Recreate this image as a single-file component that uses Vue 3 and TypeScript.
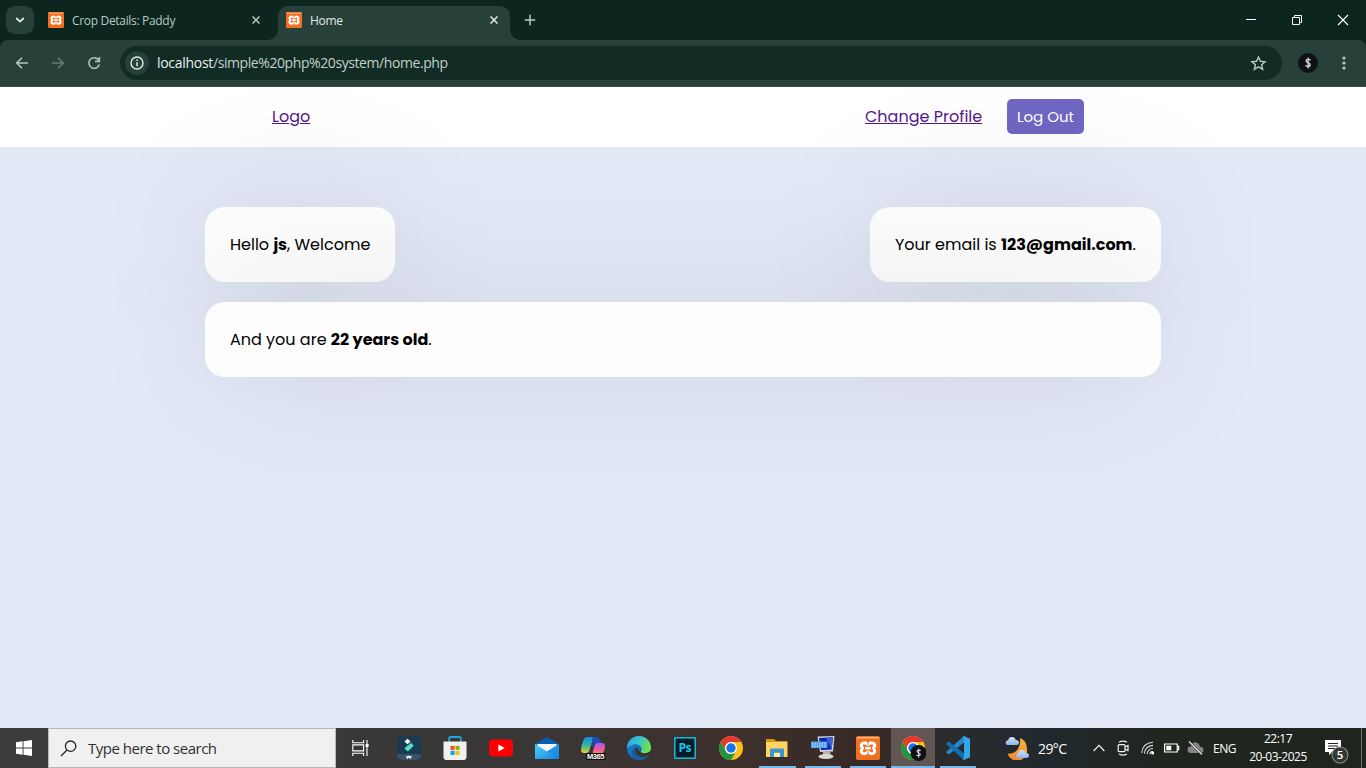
<script setup lang="ts">
interface Tab {
  title: string
  active: boolean
}

const tabs: Tab[] = [
  { title: 'Crop Details: Paddy', active: false },
  { title: 'Home', active: true },
]

interface TaskApp {
  id: string
  running?: boolean
  focused?: boolean
}

const apps: TaskApp[] = [
  { id: 'filmora' },
  { id: 'store' },
  { id: 'youtube' },
  { id: 'mail' },
  { id: 'copilot' },
  { id: 'edge' },
  { id: 'photoshop' },
  { id: 'chrome' },
  { id: 'explorer', running: true },
  { id: 'keyboard', running: true },
  { id: 'xampp', running: true },
  { id: 'chromeProfile', running: true, focused: true },
  { id: 'vscode', running: true },
]
</script>

<template>
  <svg class="defs" width="0" height="0">
    <defs>
      <linearGradient id="mailBody" x1="0" y1="0" x2="1" y2="1">
        <stop offset="0" stop-color="#50d2fa" /><stop offset="1" stop-color="#1583dc" />
      </linearGradient>
      <linearGradient id="copA" x1="0" y1="0" x2="0" y2="1">
        <stop offset="0" stop-color="#1a8be8" /><stop offset=".55" stop-color="#35b89c" /><stop offset="1" stop-color="#f0cf25" />
      </linearGradient>
      <linearGradient id="copB" x1="0" y1="0" x2="0" y2="1">
        <stop offset="0" stop-color="#a55cf0" /><stop offset=".6" stop-color="#ef5a9c" /><stop offset="1" stop-color="#f88a58" />
      </linearGradient>
      <linearGradient id="edgeTop" x1="0" y1="0" x2="1" y2=".4">
        <stop offset="0" stop-color="#2c9fe0" /><stop offset=".5" stop-color="#35c1d4" /><stop offset="1" stop-color="#6ee04a" />
      </linearGradient>
      <linearGradient id="edgeLow" x1="0" y1="0" x2="1" y2="1">
        <stop offset="0" stop-color="#1b8fdd" /><stop offset="1" stop-color="#114a8b" />
      </linearGradient>
      <linearGradient id="moonFill" x1="0" y1="0" x2="0" y2="1">
        <stop offset="0" stop-color="#f9b43a" /><stop offset="1" stop-color="#f0872a" />
      </linearGradient>
      <linearGradient id="cloudFill" x1="0" y1="0" x2="0" y2="1">
        <stop offset="0" stop-color="#d6e6fc" /><stop offset="1" stop-color="#8cb2ec" />
      </linearGradient>
      <symbol id="xampp" viewBox="0 0 24 24">
        <rect width="24" height="24" rx="2" fill="#f07020" />
        <path d="M1 1.8h22" stroke="#f9b98b" stroke-width="1.4" />
        <path d="M12 8.6C10.6 7 9 6.6 7.4 7C4.8 7.6 4.6 9.9 6.6 12C4.6 14.2 4.8 17 7.4 17.6C9 17.9 10.6 17.4 12 15.8C13.4 17.4 15 17.9 16.6 17.6C19.2 17 19.4 14.2 17.4 12C19.4 9.9 19.2 7.6 16.6 7C15 6.6 13.4 7 12 8.6Z" fill="none" stroke="#fff" stroke-width="3.1" stroke-linejoin="round" />
        <path d="M9.2 12.2h5.6" stroke="#fff" stroke-width="2.6" />
        <path d="M12 4.6v4.6M12 15.2v4.4" stroke="#f07020" stroke-width="1" />
      </symbol>
      <symbol id="chromeLogo" viewBox="0 0 48 48">
        <circle cx="24" cy="24" r="24" fill="#fbc116" />
        <path d="M3.2 12A24 24 0 0 1 44.8 12H24A12 12 0 0 0 13.6 30Z" fill="#e33b2e" />
        <path d="M3.2 12L13.6 30A12 12 0 0 0 34.4 30L24 48A24 24 0 0 1 3.2 12Z" fill="#229342" />
        <circle cx="24" cy="24" r="12" fill="#fff" />
        <circle cx="24" cy="24" r="9.4" fill="#1a73e8" />
      </symbol>
      <symbol id="dollar" viewBox="0 0 20 20">
        <circle cx="10" cy="10" r="10" fill="#0d1115" />
        <path d="M12.6 7.4C12 6.2 8.2 5.8 8.1 7.9C8 10 12.3 9.5 12.2 11.9C12.1 14 8.4 13.8 7.5 12.4M10.2 4.4v11.2" fill="none" stroke="#cfcfcf" stroke-width="1.4" />
      </symbol>
    </defs>
  </svg>

  <div class="screen">
    <div class="tabstrip">
      <button class="tab-search" aria-label="Search tabs">
        <svg width="10" height="6" viewBox="0 0 10 6"><path d="M1.2 1l3.8 3.6L8.8 1" fill="none" stroke="#e0ebe7" stroke-width="1.8" /></svg>
      </button>
      <div v-for="tab in tabs" :key="tab.title" class="tab" :class="{ active: tab.active }">
        <svg class="favicon" width="16" height="16"><use href="#xampp" /></svg>
        <span class="tab-title">{{ tab.title }}</span>
        <svg class="tab-close" width="8" height="8" viewBox="0 0 8 8"><path d="M.5.5l7 7M7.5.5l-7 7" stroke="currentColor" stroke-width="1.5" /></svg>
      </div>
      <svg class="new-tab" width="12" height="12" viewBox="0 0 12 12"><path d="M6 .8v10.4M.8 6h10.4" stroke="#b5cbc3" stroke-width="1.5" /></svg>
      <div class="window-buttons">
        <svg width="12" height="12" viewBox="0 0 12 12"><path d="M1 5.5h10" stroke="#fff" /></svg>
        <svg width="12" height="12" viewBox="0 0 12 12"><path d="M1.5 3.5h7v7h-7zM3.5 3.5v-2h7v7h-2" fill="none" stroke="#fff" /></svg>
        <svg width="12" height="12" viewBox="0 0 12 12"><path d="M1 1l10 10M11 1L1 11" stroke="#fff" stroke-width="1.2" /></svg>
      </div>
    </div>

    <div class="toolbar">
      <svg width="16" height="16" viewBox="0 0 16 16"><path d="M14 8H3M8 2.7L2.7 8L8 13.3" fill="none" stroke="#aec7be" stroke-width="1.6" /></svg>
      <svg width="16" height="16" viewBox="0 0 16 16"><path d="M2 8h11M8 2.7L13.3 8L8 13.3" fill="none" stroke="#627b73" stroke-width="1.6" /></svg>
      <svg width="16" height="16" viewBox="0 0 16 16"><path d="M12.7 5.2A5.3 5.3 0 1 0 13.3 9.4M13.4 2v4.4H9" fill="none" stroke="#aec7be" stroke-width="1.6" /></svg>
      <div class="omnibox">
        <div class="site-info">
          <svg width="14" height="14" viewBox="0 0 14 14"><circle cx="7" cy="7" r="6" fill="none" stroke="#e0ebe7" stroke-width="1.4" /><path d="M7 6.2v4M7 3.4v1.5" stroke="#e0ebe7" stroke-width="1.5" /></svg>
        </div>
        <span class="url"><b>localhost</b>/simple%20php%20system/home.php</span>
        <svg class="star" width="17" height="17" viewBox="0 0 16 16"><path d="M8 1.9l1.8 4 4.4.4-3.3 2.9 1 4.3L8 11.2l-3.9 2.3 1-4.3-3.3-2.9 4.4-.4z" fill="none" stroke="#b9cac4" stroke-width="1.3" /></svg>
      </div>
      <svg width="20" height="20"><use href="#dollar" /></svg>
      <svg width="4" height="16" viewBox="0 0 4 16" fill="#b9cac4"><circle cx="2" cy="3" r="1.6" /><circle cx="2" cy="8" r="1.6" /><circle cx="2" cy="13" r="1.6" /></svg>
    </div>

    <div class="page">
      <nav class="nav">
        <a class="link logo">Logo</a>
        <div class="right-links">
          <a class="link profile">Change Profile</a>
          <button class="btn">Log Out</button>
        </div>
      </nav>
      <main>
        <div class="top">
          <div class="box"><p class="hello">Hello <b>js</b>, Welcome</p></div>
          <div class="box"><p class="email">Your email is <b>123@gmail.com</b>.</p></div>
        </div>
        <div class="bottom">
          <div class="box"><p class="age">And you are <b>22 years old</b>.</p></div>
        </div>
      </main>
    </div>

    <div class="taskbar">
      <div class="start">
        <svg width="16" height="16" viewBox="0 0 16 16" fill="#fff"><path d="M0 2.2L6.6 1.3V7.5H0zM7.5 1.2L16 0V7.5H7.5zM0 8.4H6.6V14.7L0 13.8zM7.5 8.4H16V16L7.5 14.8z" /></svg>
      </div>
      <div class="search">
        <svg width="17" height="17" viewBox="0 0 17 17"><circle cx="10.6" cy="6.2" r="5.2" fill="none" stroke="#222" stroke-width="1.3" /><path d="M7 10L1 16" stroke="#222" stroke-width="1.3" /></svg>
        <span>Type here to search</span>
      </div>
      <div class="task-view">
        <svg width="17" height="16" viewBox="0 0 17 16" fill="none" stroke="#fff" stroke-width="1.1"><path d="M.8 0v2.8h10.8V0M.8 16v-2.8h10.8V16M.8 4.9h10.8v6H.8zM15 0v16" /><path d="M13.6 4h3v3h-3z" fill="#fff" stroke="none" /></svg>
      </div>
      <div v-for="app in apps" :key="app.id" class="app" :class="[app.id, { running: app.running, focused: app.focused }]">
        <svg v-if="app.id === 'filmora'" width="24" height="24" viewBox="0 0 24 24">
          <rect width="24" height="24" rx="5" fill="#183a52" /><path d="M0 18h24v1a5 5 0 0 1-5 5H5a5 5 0 0 1-5-5z" fill="#365168" />
          <path d="M10.5 2.7l3 2.8-3 2.8-3-2.8z" fill="#fff" /><path d="M11.8 8.8l2-2 3 2.9-6 5.8-3.4-3.1 3.2-2.8z" fill="#50e3c2" />
          <path d="M9.5 20l1 2 1.4-1.8 1.4 1.8 1-2" fill="none" stroke="#fff" stroke-width="1.3" />
        </svg>
        <svg v-else-if="app.id === 'store'" width="24" height="24" viewBox="0 0 24 24">
          <path d="M6.2 6V2.2q0-1.2 1.2-1.2h9.2q1.2 0 1.2 1.2V6" fill="none" stroke="#20a4dd" stroke-width="1.8" />
          <path d="M.5 5.5h23V21a3 3 0 0 1-3 3h-17a3 3 0 0 1-3-3z" fill="#f0f0f0" />
          <path d="M7.5 9.8h4.1v4.1H7.5z" fill="#f25022" /><path d="M12.5 9.8h4.1v4.1h-4.1z" fill="#7fba00" /><path d="M7.5 14.8h4.1v4.1H7.5z" fill="#00a4ef" /><path d="M12.5 14.8h4.1v4.1h-4.1z" fill="#ffb900" />
        </svg>
        <svg v-else-if="app.id === 'youtube'" width="24" height="24" viewBox="0 0 24 24"><rect y="3.6" width="24" height="16.8" rx="3.8" fill="#f00" /><path d="M9.4 8.6v7l6.3-3.5z" fill="#fff" /></svg>
        <svg v-else-if="app.id === 'mail'" width="24" height="24" viewBox="0 0 24 24">
          <path d="M0 8L12 1l12 7v7H0z" fill="#075fb5" /><path d="M2 8h20l-3 9H5z" fill="#f4f7fb" /><path d="M0 8l12 7.5L24 8v15H0z" fill="url(#mailBody)" /><path d="M24 8v15L10 14.2l2 1.3z" fill="#168be0" opacity=".6" />
        </svg>
        <svg v-else-if="app.id === 'copilot'" width="26" height="26" viewBox="0 0 26 26">
          <path d="M7 2h8q-2 1-3 5l-2.5 8Q8.7 18 6 18H4q-3 0-3-3 0-5 3-11Q5 2 7 2z" fill="url(#copA)" />
          <path d="M12 2h4q3 0 4 3l1 3h-5q-2 0-3 3l-1 3q1-6 0-12z" fill="#1b4fb9" />
          <path d="M17 8h5q3 0 3 3 0 8-6 8h-5q-2 0-1-3l1.5-5Q15.5 8 17 8z" fill="url(#copB)" />
          <rect x="6.3" y="18" width="19" height="7" fill="#090909" />
          <text x="7" y="24.2" textLength="17.5" font-size="7.5" font-weight="bold" font-family="Liberation Sans, sans-serif" fill="#fff">M365</text>
        </svg>
        <svg v-else-if="app.id === 'edge'" width="24" height="24" viewBox="0 0 24 24">
          <circle cx="12" cy="12" r="12" fill="url(#edgeLow)" />
          <path d="M0 12A12 12 0 0 1 24 12C24 16 20.5 17.5 17 17.2Q13.5 17 14 15.2C16.2 12.2 13 8.2 9 8.2C4 8.2 1 11 0 12z" fill="url(#edgeTop)" />
          <path d="M9 11.2C6.5 13.7 8 21 16 21Q20 21 22.4 18.6L24.4 19.4V15L21 16.6C17.5 18.3 11.5 17 11 12.5z" fill="#3b3330" />
          <path d="M9 10.5C5.5 13.5 8 20.8 15 21.3Q19 21.4 22.4 18.3Q19 24.2 12 24C5.5 23 3 16 6.5 12z" fill="#155ca8" />
        </svg>
        <svg v-else-if="app.id === 'photoshop'" width="22" height="22" viewBox="0 0 22 22">
          <rect x=".8" y=".8" width="20.4" height="20.4" fill="#061d29" stroke="#19bbdd" stroke-width="1.5" />
          <text x="4.5" y="15" textLength="13" font-size="12" font-weight="700" font-family="Open Sans, sans-serif" fill="#20c4e8">Ps</text>
        </svg>
        <svg v-else-if="app.id === 'chrome'" width="24" height="24"><use href="#chromeLogo" /></svg>
        <svg v-else-if="app.id === 'explorer'" width="24" height="24" viewBox="0 0 24 24">
          <path d="M1 3h8l2 2h11v4H1z" fill="#d99613" /><path d="M1 6h21.5v15H1z" fill="#fcd462" /><path d="M5 21v-7.2q0-1.3 1.3-1.3h11.4q1.3 0 1.3 1.3V21h-4v-4.3H9V21z" fill="#3e94d1" /><path d="M9 17h6v4H9z" fill="#fbe9a5" />
        </svg>
        <svg v-else-if="app.id === 'keyboard'" width="24" height="24" viewBox="0 0 24 24">
          <path d="M6.5.5L23.5 0 22 15.5 9 16z" fill="#cfd3d3" /><path d="M8 2l14-.7L20.6 13.6 10 14z" fill="#0925b5" /><path d="M15 1.7l7-.4-1.4 12.3z" fill="#3c62d4" />
          <path d="M12 15.5h7l1 4h-8z" fill="#b4b6b0" /><ellipse cx="15" cy="20.5" rx="7.5" ry="2.6" fill="#d9d9d1" />
          <rect x="0" y="5.5" width="16.5" height="6.5" fill="#4f9ee2" /><path d="M1 7.2h14.5M1 9h14.5M1 10.8h14.5" stroke="#c0e0ff" stroke-width=".9" stroke-dasharray="1.4 1" />
        </svg>
        <svg v-else-if="app.id === 'xampp'" width="24" height="24"><use href="#xampp" /></svg>
        <svg v-else-if="app.id === 'chromeProfile'" width="26" height="26" viewBox="0 0 26 26"><use href="#chromeLogo" x="1" y="1" width="24" height="24" /><use href="#dollar" x="10.5" y="10" width="16" height="16" /></svg>
        <svg v-else width="24" height="24" viewBox="0 0 24 24">
          <path d="M18 0L0 16l2 2.2L3.5 18 18 6.5z" fill="#2489ca" /><path d="M18 24L0 8l2-2.2L3.5 6 18 17.5z" fill="#1070b3" /><path d="M17.8 0L24 2.8v18.4L17.8 24l-1.2-1L18 21V3L16.6 1z" fill="#32a9ed" />
        </svg>
      </div>
      <div class="tray">
        <svg width="26" height="24" viewBox="0 0 26 24">
          <path d="M15 2Q21.5 4.5 21.8 12A10 10 0 0 1 2.5 17.5Q9 18.5 12.8 13Q16 8 15 2z" fill="url(#moonFill)" />
          <path d="M3.5 9Q.5 9 .7 6.3Q1 4.2 3.2 4.2Q3.8 1 7 1Q10 1 10.7 4Q14 4 14 6.8Q13.7 9 11.5 9z" fill="url(#cloudFill)" />
          <path d="M13.5 22Q10.8 22 11 19.4Q11.3 17.4 13.2 17.4Q13.8 14 17 14Q20.2 14 20.8 17Q24 17.1 24 19.7Q23.8 22 21.5 22z" fill="url(#cloudFill)" />
        </svg>
        <span class="temp">29°C</span>
        <svg width="12" height="8" viewBox="0 0 12 8"><path d="M.6 7L6 1.4 11.4 7" fill="none" stroke="#f2f2f2" stroke-width="1.2" /></svg>
        <svg width="12" height="16" viewBox="0 0 12 16" fill="none" stroke="#f2f2f2" stroke-width="1.2"><rect x="1.2" y="4.7" width="6.8" height="7" rx="1" /><path d="M8 7l3-1.5v5L8 9.2M2 2.2q4-2.3 8 0M2 14q4 2.3 8 0" /></svg>
        <svg width="14" height="14" viewBox="0 0 14 14" fill="none" stroke="#d8d8d8" stroke-width="1.1"><path d="M.7 12Q1.5 2 12 1.3M3.4 12.6Q4 5.2 12 4.4M6.1 13Q6.7 8 12 7.3M8.8 13.3Q9 10.7 12 10.4" /><circle cx="11.7" cy="12" r="1.5" fill="#fff" stroke="none" /></svg>
        <svg width="16" height="10" viewBox="0 0 16 10"><path d="M.6 1h12.6v8H.6zM13.2 3.3h1.5v3.4h-1.5" fill="none" stroke="#fff" stroke-width="1.2" /><path d="M2.3 2.7h5v4.6h-5z" fill="#fff" /></svg>
        <svg width="17" height="14" viewBox="0 0 17 14"><path d="M4 12Q.5 12 .5 8.7T4 5.6Q5 1 9 1.4Q12.5 2 13 5.7Q16.5 6 16.5 9T13.5 12z" fill="#858585" /><path d="M2 .5l13 13" stroke="#242923" stroke-width="2.2" /><path d="M2 .5l13 13" stroke="#e8e8e8" stroke-width="1.2" /></svg>
        <span class="lang">ENG</span>
        <div class="clock"><span class="time">22:17</span><span class="date">20-03-2025</span></div>
        <svg class="notice" width="26" height="26" viewBox="0 0 26 26">
          <path d="M1 2h16v12H8l-3 3v-3H1z" fill="#fff" /><path d="M4 5.5h10M4 8h10M4 10.5h7" stroke="#20251f" />
          <circle cx="16" cy="17" r="8" fill="#343834" stroke="#8b8e8a" stroke-width="1.1" />
          <text x="16" y="21.2" text-anchor="middle" font-size="11.5" font-weight="600" font-family="Open Sans, sans-serif" fill="#fff">5</text>
        </svg>
        <i class="peek"></i>
      </div>
    </div>
  </div>
</template>

<style>
body {
  margin: 0;
  overflow: hidden;
}
</style>

<style scoped>
* {
  box-sizing: border-box;
}
.defs {
  position: absolute;
}
svg {
  display: block;
  flex: none;
}
.screen {
  width: 1366px;
  height: 768px;
  display: flex;
  flex-direction: column;
  overflow: hidden;
  background: #0c251f;
  font-family: "Segoe UI", "Open Sans", "Noto Sans", sans-serif;
}
button {
  border: 0;
  padding: 0;
  font: inherit;
}

/* Browser frame */
.tabstrip {
  height: 40px;
  flex: none;
  display: flex;
  align-items: center;
  padding-left: 6px;
}
.tab-search {
  width: 28px;
  height: 28px;
  border-radius: 9px;
  background: #28403a;
  display: grid;
  place-items: center;
}
.tab {
  height: 34px;
  width: 232px;
  margin-top: 6px;
  padding: 0 12px 6px 8px;
  display: flex;
  align-items: center;
  color: #b5cbc3;
  position: relative;
}
.tab:not(.active) {
  margin-left: 6px;
  width: 238px;
  padding-right: 18px;
}
.tab.active {
  background: #28403a;
  color: #e0ebe7;
  border-radius: 10px 10px 0 0;
}
.tab.active::before,
.tab.active::after {
  content: "";
  position: absolute;
  bottom: 0;
  width: 10px;
  height: 10px;
}
.tab.active::before {
  left: -10px;
  background: radial-gradient(circle at 0 0, transparent 9.5px, #28403a 10px);
}
.tab.active::after {
  right: -10px;
  background: radial-gradient(circle at 100% 0, transparent 9.5px, #28403a 10px);
}
.tab-title {
  margin-left: 8px;
  padding-top: 1px;
  flex: 1;
  font-size: 12px;
  line-height: 16px;
  letter-spacing: -0.32px;
  white-space: nowrap;
}
.new-tab {
  margin-left: 14px;
}
.window-buttons {
  margin-left: auto;
  display: flex;
  gap: 34px;
  padding-right: 17px;
}
.toolbar {
  height: 47px;
  flex: none;
  display: flex;
  align-items: center;
  padding: 0 20px 0 14px;
  background: #28403a;
  border-radius: 8px 8px 0 0;
  border-bottom: 1px solid #3c514c;
}
.toolbar > svg:nth-child(2),
.toolbar > svg:nth-child(3) {
  margin-left: 20px;
}
.omnibox {
  margin: 0 16px 0 18px;
  height: 34px;
  flex: 1;
  border-radius: 17px;
  background: #122b25;
  display: flex;
  align-items: center;
  padding: 0 15px 0 5px;
}
.omnibox + svg {
  margin-right: 14px;
}
.toolbar > svg:last-child {
  margin-left: 10px;
}
.site-info {
  width: 24px;
  height: 24px;
  border-radius: 50%;
  background: #28403a;
  display: grid;
  place-items: center;
}
.url {
  margin-left: 8px;
  padding-bottom: 1px;
  flex: 1;
  font-size: 14px;
  letter-spacing: -0.42px;
  color: #c3cfcb;
}
.url b {
  font-weight: 400;
  letter-spacing: -0.3px;
  color: #e8f1ee;
}

/* Web page */
.page {
  flex: 1;
  background: #e4e9f7;
  overflow: hidden;
  font-family: Poppins, Inter, sans-serif;
  font-size: 16px;
  line-height: 25px;
  color: #000;
}
.nav {
  height: 60px;
  background: #fff;
  display: flex;
  align-items: center;
  justify-content: space-between;
  padding: 0 282px 2px 272px;
}
.link {
  color: #551a8b;
  text-decoration: underline;
}
.right-links {
  display: flex;
  align-items: center;
  gap: 25px;
}
.profile {
  width: 117px;
  white-space: nowrap;
}
.btn {
  width: 77px;
  height: 35px;
  border-radius: 5px;
  background: #6f67c3;
  color: #fff;
  font-size: 15px;
  text-align: center;
  white-space: nowrap;
}
main {
  width: 956px;
  margin: 60px auto 0;
}
.top {
  display: flex;
  justify-content: space-between;
}
.bottom {
  display: flex;
  margin-top: 20px;
}
.bottom .box {
  flex: 1;
}
.box {
  height: 75px;
  padding: 25px;
  background: #fdfdfd;
  border-radius: 20px;
  box-shadow: 0 0 144px 0 rgba(0, 0, 0, 0.108);
}
.box p {
  margin: 0;
  white-space: nowrap;
}
.hello {
  width: 140px;
}
.email {
  width: 241px;
}

/* Taskbar */
.taskbar {
  height: 40px;
  flex: none;
  display: flex;
  background: linear-gradient(90deg, #3c3c3b 0, #393736 520px, #3d302d 730px, #392a27 850px, #292b2d 960px, #20292d 1040px, #20251f 1160px, #1f241f 100%);
}
.start {
  width: 48px;
  display: grid;
  place-items: center;
}
.search {
  width: 288px;
  border: 1px solid #b7b7b7;
  background: #f0f0f0;
  display: flex;
  align-items: center;
  padding-left: 11px;
  gap: 11px;
  color: #303030;
  font-size: 15px;
  letter-spacing: -0.5px;
}
.task-view {
  width: 50px;
  padding-right: 2px;
  display: grid;
  place-items: center;
}
.app {
  width: 46px;
  display: grid;
  place-items: center;
  position: relative;
}
.app.keyboard,
.app.xampp,
.app.vscode {
  width: 45px;
}
.app.focused {
  width: 44px;
  margin-left: 1px;
  background: #615653;
}
.app.running::after {
  content: "";
  position: absolute;
  bottom: 0;
  left: 5px;
  right: 4px;
  height: 2px;
  background: #76b9ed;
}
.app.focused::after {
  left: 0;
  right: 0;
}
.tray {
  flex: 1;
  display: flex;
  align-items: center;
  padding-left: 25px;
  color: #fff;
  white-space: nowrap;
}
.temp {
  width: 31px;
  margin: 0 24px 0 7px;
  font-size: 14px;
  letter-spacing: -0.6px;
}
.tray > svg:nth-child(4) {
  margin-left: 12px;
}
.tray > svg:nth-child(5) {
  margin-left: 12px;
}
.tray > svg:nth-child(6) {
  margin-left: 9px;
}
.tray > svg:nth-child(7) {
  margin-left: 7px;
}
.lang {
  width: 24px;
  margin-left: 9px;
  font-size: 12px;
  letter-spacing: -0.5px;
}
.clock {
  width: 60px;
  margin-left: 11px;
  display: flex;
  flex-direction: column;
  align-items: center;
  font-size: 12px;
  line-height: 18px;
  letter-spacing: -0.5px;
}
.tray > .notice {
  margin: 5px 0 0 16px;
}
.peek {
  width: 1px;
  height: 40px;
  margin-left: 11px;
  background: #727570;
}
</style>
